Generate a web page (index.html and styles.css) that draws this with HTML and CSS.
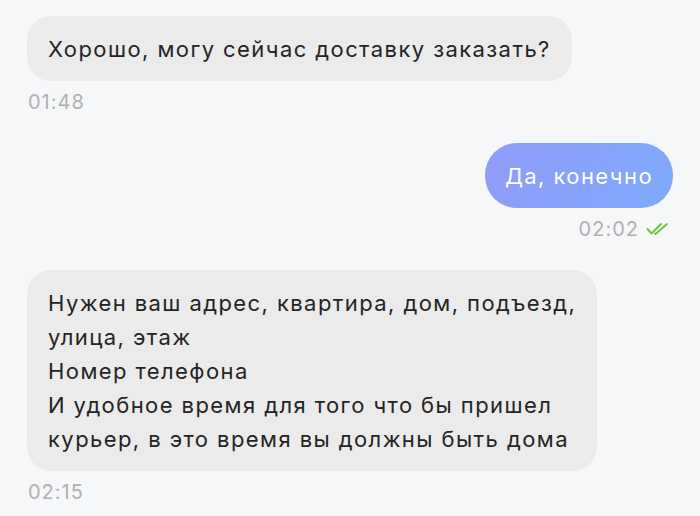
FILE: index.html
```html
<!DOCTYPE html>
<html lang="ru">
<head>
<meta charset="utf-8">
<link rel="stylesheet" href="styles.css">
</head>
<body>
<div class="chat">
  <div class="msg in">
    <div class="bubble">Хорошо, могу сейчас доставку заказать?</div>
    <div class="meta"><span class="time">01:48</span></div>
  </div>
  <div class="msg out">
    <div class="bubble">Да, конечно</div>
    <div class="meta"><span class="time">02:02</span>
      <svg class="ticks" width="24" height="15" viewBox="0 0 24 15"><path d="M1.5 7 L5.5 11.5 L15 2" fill="none" stroke="#6cc63c" stroke-width="1.9" stroke-linecap="round" stroke-linejoin="round"/><path d="M9 11.5 L9.5 12 L21 2" fill="none" stroke="#6cc63c" stroke-width="1.9" stroke-linecap="round" stroke-linejoin="round"/></svg>
    </div>
  </div>
  <div class="msg in">
    <div class="bubble">Нужен ваш адрес, квартира, дом, подъезд,<br>улица, этаж<br>Номер телефона<br>И удобное время для того что бы пришел<br>курьер, в это время вы должны быть дома</div>
    <div class="meta"><span class="time">02:15</span></div>
  </div>
</div>
</body>
</html>
```
FILE: styles.css
```css
html, body {
  margin: 0;
  padding: 0;
  background: #f6f7f9;
}
body {
  font-family: Inter, "Noto Sans", sans-serif;
  -webkit-font-smoothing: antialiased;
}
.chat {
  display: flex;
  flex-direction: column;
  gap: 29px;
  padding: 16px 27px 0 27px;
}
.msg {
  display: flex;
  flex-direction: column;
  align-items: flex-start;
  gap: 9px;
}
.msg.out {
  align-items: flex-end;
}
.bubble {
  font-size: 22px;
  line-height: 34px;
  letter-spacing: 1.42px;
  color: #242424;
  background: #ebebeb;
  border-radius: 24px;
  padding: 15.5px 21px;
}
.out .bubble {
  color: #ffffff;
  background: linear-gradient(100deg, #909cf9 0%, #7eaafb 100%);
  border-radius: 32px;
  padding: 15.5px 20px;
}
.meta {
  display: flex;
  align-items: center;
  gap: 7px;
  padding-left: 1px;
}
.out .meta {
  padding-right: 3px;
}
.time {
  font-size: 20px;
  line-height: 24px;
  letter-spacing: 1px;
  color: #b0b0b3;
}
.ticks {
  display: block;
}
```
